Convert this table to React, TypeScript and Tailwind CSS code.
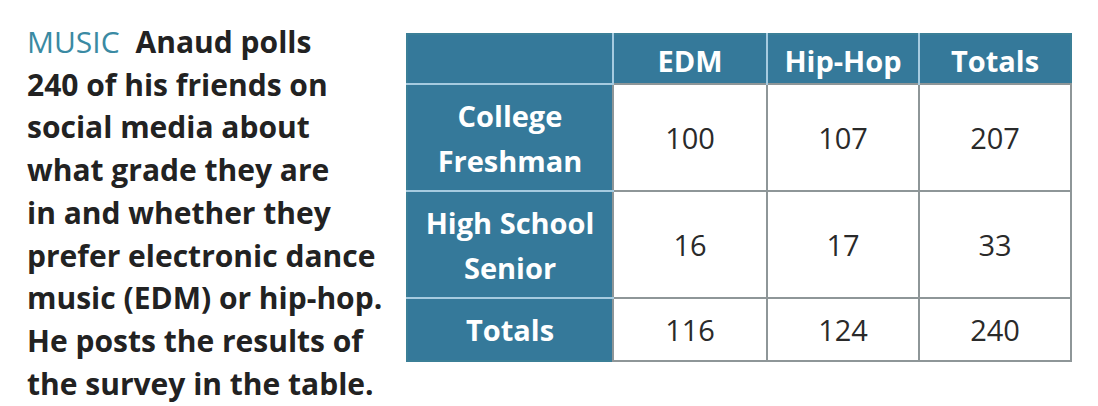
export default function App() {
  const lines = [
    '240 of his friends on',
    'social media about',
    'what grade they are',
    'in and whether they',
    'prefer electronic dance',
    'music (EDM) or hip-hop.',
    'He posts the results of',
    'the survey in the table.',
  ]
  const rows = [
    { label: ['College', 'Freshman'], values: ['100', '107', '207'], h: 'h-[107px]' },
    { label: ['High School', 'Senior'], values: ['16', '17', '33'], h: 'h-[107px]' },
    { label: ['Totals'], values: ['116', '124', '240'], h: 'h-[63px]' },
  ]

  return (
    <div className="w-[1098px] h-[406px] bg-white flex font-['Open_Sans',sans-serif] overflow-hidden">
      {/* problem text */}
      <div className="pl-[27px] pt-[21px] w-[400px] shrink-0 text-[30px] leading-[42.7px] font-bold text-[#222] whitespace-nowrap">
        <div>
          <span className="font-normal text-[#3a8aa3]">MUSIC</span>
          <span className="ml-[16px]">Anaud polls</span>
        </div>
        {lines.map((l) => (
          <div key={l}>{l}</div>
        ))}
      </div>

      {/* table */}
      <div className="pt-[33px] pl-[6px]">
        <table className="border-collapse border-2 border-[#3b7f97]">
          <thead>
            <tr className="h-[50px] bg-[#35799a] text-white text-[29px] font-bold">
              <th className="w-[206px] border-b-2 border-b-[#a6cbe0]"></th>
              <th className="w-[154px] border-l-2 border-l-[#a6cbe0] pt-[4px]">EDM</th>
              <th className="w-[152px] border-l-2 border-l-[#a6cbe0] pt-[4px]">Hip-Hop</th>
              <th className="w-[152px] border-l-2 border-l-[#a6cbe0] pt-[4px]">Totals</th>
            </tr>
          </thead>
          <tbody>
            {rows.map((r, i) => (
              <tr key={i} className={r.h}>
                <th
                  className={`bg-[#35799a] text-white text-[29px] font-bold leading-[45px] ${
                    i < rows.length - 1 ? 'border-b-2 border-b-[#a6cbe0]' : ''
                  }`}
                >
                  {r.label.map((t) => (
                    <div key={t}>{t}</div>
                  ))}
                </th>
                {r.values.map((v, j) => (
                  <td
                    key={j}
                    className="text-center text-[29px] text-[#2a2a2a] border-2 border-[#8e9698]"
                  >
                    {v}
                  </td>
                ))}
              </tr>
            ))}
          </tbody>
        </table>
      </div>
    </div>
  )
}
